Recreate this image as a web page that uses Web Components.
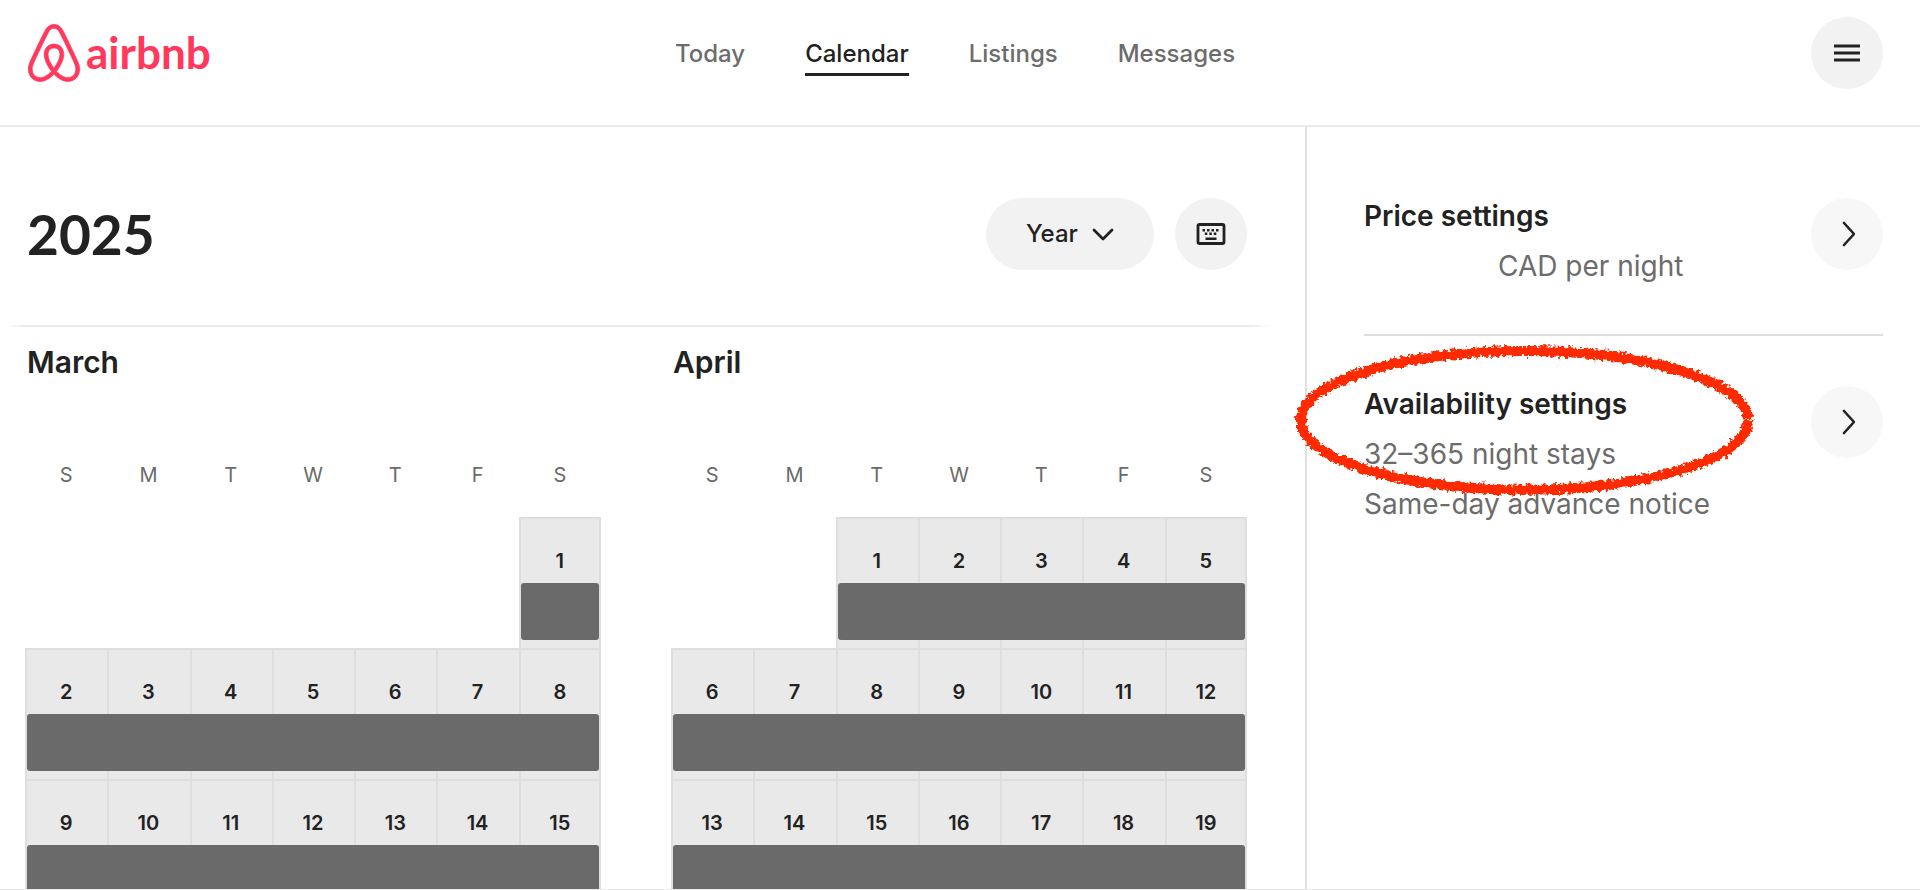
<!DOCTYPE html>
<html lang="en">
<head>
<meta charset="utf-8">
<meta name="viewport" content="width=device-width, initial-scale=1">
<title>Calendar – Airbnb</title>
<style>
  body { margin: 0; font-family: Inter, "Liberation Sans", sans-serif; color: #222; background: #fff; }
</style>
</head>
<body>
<host-app></host-app>

<template id="t-app">
  <style>
    :host { display: flex; flex-direction: column; height: 100vh; box-sizing: border-box; overflow: hidden; border-bottom: 1px solid #e8e8e8; }
    main { flex: 1; min-height: 0; display: grid; grid-template-columns: minmax(0, 1fr) 615px; }
    .calendar { overflow: auto; scrollbar-width: none; }
    .months { display: grid; grid-template-columns: 1fr 1fr; gap: 70px; padding: 15px 58px 0 25px; }
    aside { border-left: 2px solid #e0e0e0; padding: 21px 37px 0 57px; }
    .gap { display: inline-block; width: 134px; }
  </style>
  <site-header></site-header>
  <main>
    <section class="calendar">
      <calendar-toolbar>2025</calendar-toolbar>
      <div class="months">
        <month-grid name="March" offset="6" last="15"></month-grid>
        <month-grid name="April" offset="2" last="19"></month-grid>
      </div>
    </section>
    <aside>
      <settings-card label="Price settings">
        <span slot="title">Price settings</span>
        <div><span class="gap"></span>CAD per night</div>
      </settings-card>
      <settings-card label="Availability settings" marked>
        <span slot="title">Availability settings</span>
        <div>32–365 night stays</div>
        <div>Same-day advance notice</div>
      </settings-card>
    </aside>
  </main>
</template>

<template id="t-header">
  <style>
    :host { display: block; border-bottom: 2px solid #ebebeb; }
    header { display: grid; grid-template-columns: 1fr auto 1fr; align-items: start; padding: 17px 37px 36px 27px; }
    .logo { display: flex; align-items: center; gap: 5px; height: 72px; color: #ff385c; text-decoration: none; width: max-content; }
    .logo svg { width: 54px; height: 58px; }
    .logo span { font: 700 44px/70px Lato, sans-serif; height: 72px; }
    nav { display: flex; gap: 60px; padding-top: 22px; }
    nav a { font-size: 24px; font-weight: 500; line-height: 30px; color: #6c6c6c; text-decoration: none; padding-bottom: 4px; border-bottom: 3px solid transparent; }
    nav a[aria-current] { color: #222; border-color: #222; }
    round-button { justify-self: end; }
  </style>
  <header>
    <a class="logo" href="#" aria-label="airbnb">
      <svg viewBox="2.2 .7 27.6 30.6" fill="currentColor" stroke="currentColor" stroke-width=".4" aria-hidden="true"><path d="M16 1c2.008 0 3.463.963 4.751 3.269l.533 1.025c1.954 3.83 6.114 12.54 7.1 14.836l.145.353c.667 1.591.91 2.472.96 3.396l.01.415.001.228c0 4.062-2.877 6.478-6.357 6.478-2.224 0-4.556-1.258-6.709-3.386l-.257-.26-.172-.179h-.011l-.176.185c-2.044 2.1-4.267 3.42-6.414 3.615l-.28.019-.267.006C5.377 31 2.5 28.584 2.5 24.522l.005-.469c.026-.928.23-1.768.83-3.244l.216-.524c.966-2.298 6.083-12.989 7.707-16.034C12.537 1.963 13.992 1 16 1zm0 2c-1.239 0-2.053.539-2.987 2.21l-.523 1.008c-1.926 3.776-6.06 12.43-7.031 14.692l-.345.836c-.427 1.071-.573 1.655-.605 2.24l-.009.33v.206C4.5 27.395 6.411 29 8.857 29c1.773 0 3.87-1.236 5.831-3.354-2.295-2.938-3.855-6.45-3.855-8.91 0-2.913 1.933-5.386 5.178-5.42 3.223.034 5.156 2.507 5.156 5.42 0 2.456-1.555 5.96-3.855 8.907C19.277 27.766 21.37 29 23.143 29c2.447 0 4.358-1.605 4.358-4.478l-.004-.411c-.019-.672-.17-1.296-.714-2.62l-.248-.6c-1.065-2.478-5.993-12.768-7.538-15.664C18.053 3.539 17.24 3 16 3zm.01 10.316c-2.01.021-3.177 1.514-3.177 3.42 0 1.797 1.18 4.58 2.955 7.044l.21.287.174-.234c1.73-2.385 2.898-5.066 2.989-6.875l.006-.221c0-1.906-1.167-3.4-3.156-3.421h-.001z"/></svg>
      <span>airbnb</span>
    </a>
    <nav>
      <a href="#today">Today</a>
      <a href="#calendar" aria-current="page">Calendar</a>
      <a href="#listings">Listings</a>
      <a href="#messages">Messages</a>
    </nav>
    <round-button label="Menu">
      <svg width="26" height="20" viewBox="0 0 26 20" stroke="#222" stroke-width="3"><path d="M0 3h26M0 10h26M0 17h26"/></svg>
    </round-button>
  </header>
</template>

<template id="t-round">
  <style>
    :host { display: block; flex: none; --fill: #f2f2f2; }
    :host([light]) { --fill: #f7f7f7; }
    button { display: flex; align-items: center; justify-content: center; width: 72px; height: 72px; padding: 0; border: 0; border-radius: 50%; background: var(--fill); cursor: pointer; }
  </style>
  <button type="button"><slot></slot></button>
</template>

<template id="t-toolbar">
  <style>
    :host { display: block; }
    .row { display: flex; align-items: center; gap: 21px; padding: 71px 58px 55px 27px; }
    h1 { flex: 1; margin: 0; font: 700 55px/72px Lato, sans-serif; }
    .picker { display: grid; align-items: center; }
    .picker > * { grid-area: 1 / 1; }
    select { appearance: none; width: 168px; height: 72px; padding: 0 0 0 40px; border: 0; border-radius: 36px; background: #f2f2f2; color: #222; font: 500 24px/30px Inter, sans-serif; cursor: pointer; }
    .picker svg { justify-self: end; margin-right: 40px; pointer-events: none; }
    .rule { height: 2px; margin: 0 35px 0 5px; background: linear-gradient(90deg, transparent, #ebebeb 20px, #ebebeb calc(100% - 20px), transparent); }
  </style>
  <div class="row">
    <h1><slot></slot></h1>
    <div class="picker">
      <select aria-label="Calendar view"><option>Year</option></select>
      <svg width="22" height="14" viewBox="0 0 22 14" fill="none" stroke="#222" stroke-width="2.8" stroke-linecap="round" stroke-linejoin="round"><path d="M2 3l9 9 9-9"/></svg>
    </div>
    <round-button label="Keyboard shortcuts">
      <svg width="30" height="22" viewBox="0 0 30 22"><rect x="2" y="1.5" width="26" height="19" rx="1.5" fill="none" stroke="#222" stroke-width="2.8"/><path fill="#222" d="M6.500 6h2.500v2.500h-2.500zM11 6h2.500v2.500h-2.500zM15.500 6h2.500v2.500h-2.500zM20 6h2.500v2.500h-2.500zM8.800 9.500h2.500v2.500h-2.500zM13.300 9.500h2.500v2.500h-2.500zM17.800 9.500h2.500v2.500h-2.500zM9.500 14.500h11v2.600h-11z"/></svg>
    </round-button>
  </div>
  <div class="rule"></div>
</template>

<template id="t-month">
  <style>
    :host { display: block; }
    h2 { margin: 0 0 50px 2px; font-size: 30px; line-height: 40px; font-weight: 600; }
    table { width: 100%; table-layout: fixed; border-collapse: collapse; }
    th { height: 85px; padding: 0; font-size: 20px; font-weight: 400; color: #6a6a6a; }
    td { height: 131px; padding: 0; vertical-align: top; text-align: center; font-size: 20px; font-weight: 600; line-height: 30px; }
    .day { background: #e9e9e9; box-shadow: inset 2px 2px #dedede; }
    .day:last-child { box-shadow: inset 2px 2px #dedede, inset -2px 0 #dedede; }
    .num { display: block; padding: 29px 0 7px; }
    .bar { display: block; height: 57px; background: #6a6a6a; }
    .start .bar { margin-left: 2px; border-radius: 3px 0 0 3px; }
    .day:last-child .bar { margin-right: 2px; border-radius: 0 3px 3px 0; }
    .start:last-child .bar { border-radius: 3px; }
  </style>
  <h2></h2>
  <table>
    <thead><tr><th scope="col">S</th><th scope="col">M</th><th scope="col">T</th><th scope="col">W</th><th scope="col">T</th><th scope="col">F</th><th scope="col">S</th></tr></thead>
    <tbody></tbody>
  </table>
</template>

<template id="t-card">
  <style>
    :host { display: flex; position: relative; justify-content: space-between; padding: 43px 0; font-size: 28px; line-height: 50px; color: #6c6c6c; }
    :host(:not([marked])) { border-bottom: 2px solid #dedede; }
    h3 { margin: 0; font-size: 28px; font-weight: 600; color: #222; }
    round-button { margin-top: 7px; }
    .mark { display: none; position: absolute; left: -74px; top: 4px; pointer-events: none; }
    :host([marked]) .mark { display: block; }
  </style>
  <div><h3><slot name="title"></slot></h3><slot></slot></div>
  <round-button light>
    <svg width="16" height="28" viewBox="0 0 16 28" fill="none" stroke="#222" stroke-width="2.600" stroke-linecap="round" stroke-linejoin="round"><path d="M5 3l10 11L5 25"/></svg>
  </round-button>
  <svg class="mark" width="468" height="160" viewBox="0 0 468 160" fill="none" aria-hidden="true">
    <filter id="crayon" x="0" y="0" width="468" height="160" filterUnits="userSpaceOnUse">
      <feTurbulence type="fractalNoise" baseFrequency=".28" numOctaves="2" seed="7"/>
      <feDisplacementMap in="SourceGraphic" scale="8" xChannelSelector="R" yChannelSelector="G"/>
      <feGaussianBlur stdDeviation=".5"/>
    </filter>
    <path filter="url(#crayon)" stroke="#ff2a05" stroke-width="10" d="M458 81A223.500 69 0 0 1 11 80.500A223.500 69 0 0 1 458 79.500"/>
  </svg>
</template>

<script>
  class Base extends HTMLElement {
    constructor() {
      super();
      const t = document.getElementById(this.constructor.template);
      this.attachShadow({ mode: 'open' }).append(document.importNode(t.content, true));
    }
  }
  class RoundButton extends Base {
    static template = 't-round';
    static observedAttributes = ['label'];
    attributeChangedCallback(name, old, value) {
      this.shadowRoot.querySelector('button').setAttribute('aria-label', value);
    }
  }
  class MonthGrid extends Base {
    static template = 't-month';
    connectedCallback() {
      const root = this.shadowRoot;
      const offset = Number(this.getAttribute('offset'));
      const last = Number(this.getAttribute('last'));
      root.querySelector('h2').textContent = this.getAttribute('name');
      root.querySelector('table').setAttribute('aria-label', this.getAttribute('name'));
      const body = root.querySelector('tbody');
      body.replaceChildren();
      let row;
      for (let i = 0; i < offset + last; i++) {
        if (i % 7 === 0) row = body.insertRow();
        const cell = row.insertCell();
        const day = i - offset + 1;
        if (day < 1) continue;
        cell.className = day === 1 || i % 7 === 0 ? 'day start' : 'day';
        cell.innerHTML = `<span class="num">${day}</span><span class="bar"></span>`;
      }
    }
  }
  class SettingsCard extends Base {
    static template = 't-card';
    connectedCallback() {
      this.shadowRoot.querySelector('round-button').setAttribute('label', this.getAttribute('label'));
    }
  }
  customElements.define('round-button', RoundButton);
  customElements.define('month-grid', MonthGrid);
  customElements.define('settings-card', SettingsCard);
  customElements.define('calendar-toolbar', class extends Base { static template = 't-toolbar'; });
  customElements.define('site-header', class extends Base { static template = 't-header'; });
  customElements.define('host-app', class extends Base { static template = 't-app'; });
</script>
</body>
</html>
